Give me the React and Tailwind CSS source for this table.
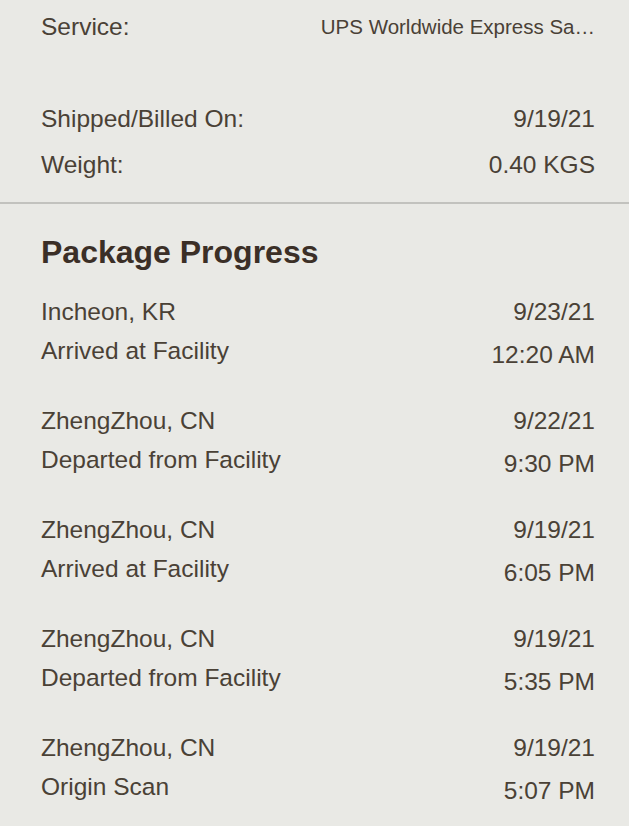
import React from "react";

const events = [
  ["Incheon, KR", "Arrived at Facility", "9/23/21", "12:20 AM"],
  ["ZhengZhou, CN", "Departed from Facility", "9/22/21", "9:30 PM"],
  ["ZhengZhou, CN", "Arrived at Facility", "9/19/21", "6:05 PM"],
  ["ZhengZhou, CN", "Departed from Facility", "9/19/21", "5:35 PM"],
  ["ZhengZhou, CN", "Origin Scan", "9/19/21", "5:07 PM"],
];

export default function App() {
  return (
    <div
      className="w-[629px] h-[826px] overflow-hidden bg-[#e9e9e5] text-[#4a4136]"
      style={{ fontFamily: '"Liberation Sans", Arial, sans-serif' }}
    >
      <div className="pl-[41px] pr-[34px]">
        <div className="flex justify-between items-center h-[54px] text-[24.5px]">
          <span>Service:</span>
          <span className="text-[20.5px]">UPS Worldwide Express Sa…</span>
        </div>
        <div className="flex justify-between items-center h-[46px] mt-[42px] text-[24.5px]">
          <span>Shipped/Billed On:</span>
          <span>9/19/21</span>
        </div>
        <div className="flex justify-between items-center h-[46px] text-[24.5px]">
          <span>Weight:</span>
          <span>0.40 KGS</span>
        </div>
      </div>
      <div className="mt-[14px] h-[2px] bg-[#c2c2be]" />
      <div className="pl-[41px] pr-[34px]">
        <div className="h-[80px] mt-[8px] flex items-center">
          <h2 className="text-[32px] font-bold text-[#3b2f27] leading-none">Package Progress</h2>
        </div>
        <div className="flex flex-col gap-[27px]">
          {events.map((e, i) => (
            <div key={i} className="flex justify-between text-[24.5px]">
              <div className="flex flex-col">
                <span className="leading-[39px]">{e[0]}</span>
                <span className="leading-[39px]">{e[1]}</span>
              </div>
              <div className="flex flex-col items-end">
                <span className="leading-[39px]">{e[2]}</span>
                <span className="leading-[39px] mt-[4px]">{e[3]}</span>
              </div>
            </div>
          ))}
        </div>
      </div>
    </div>
  );
}
